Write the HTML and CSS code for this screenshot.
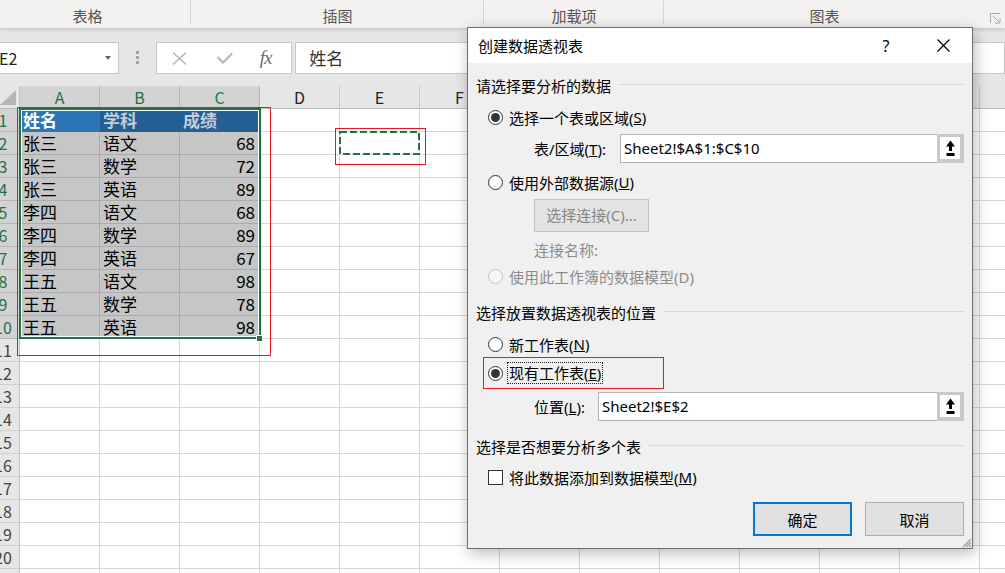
FILE: index.html
```html
<!DOCTYPE html>
<html>
<head>
    <meta charset="utf-8">
    <title>创建数据透视表</title>
    <link rel="stylesheet" href="styles.css">
</head>
<body>
    <div class="ribbon">
        <div class="group g-table">表格</div>
        <div class="group g-illus">插图</div>
        <div class="group g-addin">加载项</div>
        <div class="group g-chart">图表
            <svg class="launcher" width="11" height="11" viewBox="0 0 11 11">
                <path d="M0.5 10V0.5H10" fill="none" stroke="#a8a8a8"/>
                <path d="M3 3l6.5 6.5M5 10h5V5" fill="none" stroke="#a8a8a8"/>
            </svg>
        </div>
    </div>

    <div class="formula-bar">
        <div class="name-box"><span>E2</span><span class="caret"></span></div>
        <div class="grip"><i></i><i></i><i></i></div>
        <div class="fx-buttons">
            <svg class="fx-cancel" width="15" height="13" viewBox="0 0 15 13">
                <path d="M1 0.5L14 12.5M14 0.5L1 12.5" stroke="#b9b9b9" stroke-width="1.6"/>
            </svg>
            <svg class="fx-enter" width="17" height="12" viewBox="0 0 17 12">
                <path d="M1.5 5L7 10.5L16 1.5" fill="none" stroke="#b9b9b9" stroke-width="2.4"/>
            </svg>
            <span class="fx">fx</span>
        </div>
        <div class="formula-input">姓名</div>
    </div>

    <div class="sheet">
        <div class="col-heads">
            <div class="corner"></div>
            <div class="col sel">A</div>
            <div class="col sel">B</div>
            <div class="col sel">C</div>
            <div class="col">D</div>
            <div class="col">E</div>
            <div class="col">F</div>
            <!-- columns under the dialog -->
            <div class="col"></div>
            <div class="col"></div>
            <div class="col"></div>
            <div class="col"></div>
            <div class="col"></div>
            <div class="col"></div>
            <div class="col"></div>
        </div>
        <div class="sheet-body">
            <div class="row-heads">
                <div class="rh sel"><span>1</span></div>
                <div class="rh sel"><span>2</span></div>
                <div class="rh sel"><span>3</span></div>
                <div class="rh sel"><span>4</span></div>
                <div class="rh sel"><span>5</span></div>
                <div class="rh sel"><span>6</span></div>
                <div class="rh sel"><span>7</span></div>
                <div class="rh sel"><span>8</span></div>
                <div class="rh sel"><span>9</span></div>
                <div class="rh sel"><span>10</span></div>
                <div class="rh"><span>11</span></div>
                <div class="rh"><span>12</span></div>
                <div class="rh"><span>13</span></div>
                <div class="rh"><span>14</span></div>
                <div class="rh"><span>15</span></div>
                <div class="rh"><span>16</span></div>
                <div class="rh"><span>17</span></div>
                <div class="rh"><span>18</span></div>
                <div class="rh"><span>19</span></div>
                <div class="rh"><span>20</span></div>
                <div class="rh"></div>
            </div>
            <div class="cells">
                <div class="data">
                    <div class="th active">姓名</div><div class="th">学科</div><div class="th">成绩</div>
                    <div>张三</div><div>语文</div><div class="num">68</div>
                    <div>张三</div><div>数学</div><div class="num">72</div>
                    <div>张三</div><div>英语</div><div class="num">89</div>
                    <div>李四</div><div>语文</div><div class="num">68</div>
                    <div>李四</div><div>数学</div><div class="num">89</div>
                    <div>李四</div><div>英语</div><div class="num">67</div>
                    <div>王五</div><div>语文</div><div class="num">98</div>
                    <div>王五</div><div>数学</div><div class="num">78</div>
                    <div>王五</div><div>英语</div><div class="num">98</div>
                </div>
                <div class="selection"></div>
                <div class="fill-handle"></div>
                <svg class="copy-ants" width="81" height="24" viewBox="0 0 81 24">
                    <rect x="1" y="1" width="79" height="22" fill="none" stroke="#217346" stroke-width="2" stroke-dasharray="7 3"/>
                </svg>
                <div class="mark mark-table"></div>
                <div class="mark mark-target"></div>
            </div>
        </div>
    </div>

    <div class="dialog">
        <div class="dialog-title">
            <span class="title-text">创建数据透视表</span>
            <span class="title-help">?</span>
            <span class="title-close">
                <svg width="13" height="13" viewBox="0 0 13 13">
                    <path d="M0.5 0.5L12.5 12.5M12.5 0.5L0.5 12.5" stroke="#000" stroke-width="1.2"/>
                </svg>
            </span>
        </div>
        <div class="dialog-body">
            <div class="section sec-first">请选择要分析的数据</div>
            <div class="option"><span class="radio checked"></span>选择一个表或区域(<u>S</u>)</div>
            <div class="field field-range">
                <label>表/区域(<u>T</u>):</label>
                <div class="ref-input">Sheet2!$A$1:$C$10</div>
                <div class="ref-btn"><span>
                    <svg width="9" height="17" viewBox="0 0 9 17">
                        <path d="M4.5 0.5L9 6.5H6V11H3V6.5H0Z" fill="#000"/>
                        <rect x="0.5" y="13" width="8" height="3" fill="#000"/>
                    </svg>
                </span></div>
            </div>
            <div class="option option-ext"><span class="radio"></span>使用外部数据源(<u>U</u>)</div>
            <div class="conn-btn">选择连接(C)...</div>
            <div class="conn-name">连接名称:</div>
            <div class="option option-model disabled"><span class="radio"></span>使用此工作簿的数据模型(D)</div>

            <div class="section">选择放置数据透视表的位置</div>
            <div class="option"><span class="radio"></span>新工作表(<u>N</u>)</div>
            <div class="option option-exist">
                <span class="radio checked"></span><span class="focus-label">现有工作表(<u>E</u>)</span>
                <div class="mark mark-option"></div>
            </div>
            <div class="field field-loc">
                <label>位置(<u>L</u>):</label>
                <div class="ref-input">Sheet2!$E$2</div>
                <div class="ref-btn"><span>
                    <svg width="9" height="17" viewBox="0 0 9 17">
                        <path d="M4.5 0.5L9 6.5H6V11H3V6.5H0Z" fill="#000"/>
                        <rect x="0.5" y="13" width="8" height="3" fill="#000"/>
                    </svg>
                </span></div>
            </div>

            <div class="section">选择是否想要分析多个表</div>
            <div class="option option-multi"><span class="checkbox"></span>将此数据添加到数据模型(<u>M</u>)</div>

            <div class="actions">
                <button class="btn primary">确定</button>
                <button class="btn">取消</button>
            </div>
        </div>
        <svg class="resize-grip" width="11" height="11" viewBox="0 0 11 11">
            <path d="M10 2L2 10M10 5L5 10M10 8L8 10" stroke="#9a9a9a" stroke-width="1.2"/>
        </svg>
    </div>
</body>
</html>
```

FILE: styles.css
```css
* {
    box-sizing: border-box;
}

body {
    margin: 0;
    width: 1005px;
    height: 573px;
    overflow: hidden;
    position: relative;
    background: #fff;
    font-family: "Noto Sans CJK SC", "Noto Sans", sans-serif;
    color: #000;
}

/* Ribbon group labels */
.ribbon {
    display: flex;
    height: 28px;
    background: #f3f2f1;
    position: relative;
    z-index: 1;
    box-shadow: 0 1px 4px rgba(0, 0, 0, 0.2);
}

.ribbon .group {
    position: relative;
    height: 28px;
    padding-top: 6px;
    font-size: 15px;
    line-height: 20px;
    color: #555;
    text-align: center;
}

.ribbon .group::after {
    content: "";
    position: absolute;
    right: 0;
    top: 0;
    width: 1px;
    height: 24px;
    background: #d6d4d2;
}

.g-table { width: 191px; padding-right: 16px; }
.g-illus { width: 293px; }
.g-addin { width: 180px; }
.g-chart { flex: 1; padding-right: 20px; }
.ribbon .g-chart::after { display: none; }

.launcher {
    position: absolute;
    right: 4px;
    top: 13px;
}

/* Formula bar */
.formula-bar {
    display: flex;
    align-items: flex-start;
    height: 58px;
    padding-top: 14px;
    background: #e6e6e6;
}

.name-box {
    display: flex;
    align-items: center;
    justify-content: space-between;
    width: 125px;
    height: 32px;
    margin-left: -6px;
    padding: 0 7px 0 4px;
    border: 1px solid #c8c8c8;
    background: #fff;
    font-size: 16px;
    color: #222;
}

.caret {
    width: 0;
    height: 0;
    border-left: 3.5px solid transparent;
    border-right: 3.5px solid transparent;
    border-top: 4px solid #666;
}

.grip {
    display: flex;
    flex-direction: column;
    gap: 2px;
    margin: 9px 0 0 17px;
}

.grip i {
    width: 3px;
    height: 3px;
    background: #a3a3a3;
}

.fx-buttons {
    display: flex;
    align-items: center;
    width: 137px;
    height: 32px;
    margin-left: 17px;
    padding-left: 15px;
    border: 1px solid #c8c8c8;
    background: #fff;
}

.fx-enter { margin-left: 29px; }

.fx {
    margin-left: 27px;
    font-family: "Liberation Serif", serif;
    font-style: italic;
    font-size: 19px;
    color: #6e6e6e;
    letter-spacing: -1px;
}

.formula-input {
    width: 712px;
    height: 32px;
    margin-left: 3px;
    padding-left: 13px;
    border: 1px solid #c8c8c8;
    background: #fff;
    font-size: 17px;
    line-height: 29px;
    color: #333;
}

/* Worksheet */
.sheet {
    height: 487px;
    overflow: hidden;
}

.col-heads {
    display: flex;
    height: 23px;
}

.corner {
    position: relative;
    width: 20px;
    flex-shrink: 0;
    background: #e6e6e6;
    border-right: 1px solid #c3c3c3;
    border-bottom: 1px solid #bdbdbd;
}

.corner::after {
    content: "";
    position: absolute;
    right: 3px;
    bottom: 3px;
    width: 0;
    height: 0;
    border-left: 16px solid transparent;
    border-bottom: 15px solid #b5b5b5;
}

.col {
    width: 80px;
    flex-shrink: 0;
    background: #e6e6e6;
    border-right: 1px solid #c9c9c9;
    border-bottom: 1px solid #bdbdbd;
    text-align: center;
    font-size: 16px;
    line-height: 22px;
    color: #222;
}

.col.sel {
    background: #d3d3d3;
    border-right-color: #b5b5b5;
    color: #217346;
}

.sheet-body {
    display: flex;
}

.row-heads {
    width: 20px;
    flex-shrink: 0;
}

.rh {
    height: 23px;
    overflow: hidden;
    background: #e6e6e6;
    border-right: 1px solid #bdbdbd;
    border-bottom: 1px solid #cfcfcf;
    font-size: 16px;
    line-height: 22px;
    color: #444;
}

.rh span {
    display: block;
    width: 32px;
    margin-left: -13px;
    text-align: center;
}

.rh.sel {
    background: #d3d3d3;
    border-bottom-color: #b5b5b5;
    color: #217346;
}

.cells {
    position: relative;
    flex: 1;
    height: 464px;
    background-image:
        linear-gradient(to right, transparent 79px, #d6d6d6 79px),
        linear-gradient(to bottom, transparent 22px, #d6d6d6 22px);
    background-size: 80px 23px;
}

.data {
    display: grid;
    grid-template-columns: repeat(3, 80px);
    grid-auto-rows: 23px;
    width: 240px;
}

.data div {
    padding: 0 4px 0 3px;
    border-right: 1px solid #ababab;
    border-bottom: 1px solid #ababab;
    background: #c6c6c6;
    font-size: 17px;
    line-height: 22px;
    white-space: nowrap;
    overflow: hidden;
}

.data .num {
    text-align: right;
}

.data .th {
    background: #245e92;
    border-color: #245e92;
    color: #c4cdd9;
    font-weight: bold;
}

.data .th.active {
    background: #2e75b6;
    border-color: #2e75b6;
    color: #fff;
}

.selection {
    position: absolute;
    left: -1px;
    top: -1px;
    width: 242px;
    height: 231px;
    border: 2px solid #217346;
    box-shadow: inset 0 0 0 1px #fff;
}

.fill-handle {
    position: absolute;
    left: 236px;
    top: 226px;
    width: 7px;
    height: 7px;
    background: #217346;
    border: 1px solid #fff;
}

.copy-ants {
    position: absolute;
    left: 319px;
    top: 22px;
}

/* Red annotation boxes */
.mark {
    position: absolute;
    border: 1px solid #e5191f;
}

.mark-table { left: -3px; top: -2px; width: 254px; height: 249px; }
.mark-target { left: 315px; top: 19px; width: 91px; height: 37px; }

/* PivotTable dialog */
.dialog {
    position: absolute;
    left: 467px;
    top: 27px;
    z-index: 2;
    width: 506px;
    height: 522px;
    border: 1px solid #6e6e6e;
    background: #f0f0f0;
    box-shadow: 2px 4px 14px rgba(0, 0, 0, 0.28);
    font-family: "Noto Sans", "Noto Sans CJK SC", sans-serif;
    font-size: 15px;
}

.dialog-title {
    display: flex;
    align-items: center;
    height: 35px;
    padding-left: 10px;
    background: #fff;
}

.title-text {
    flex: 1;
}

.title-help {
    width: 30px;
    margin-right: 19px;
    text-align: center;
    font-size: 16px;
}

.title-close {
    display: flex;
    align-items: center;
    justify-content: center;
    width: 46px;
    margin-right: 6px;
}

.dialog-body {
    padding: 0 8px;
}

.section {
    display: flex;
    align-items: center;
    height: 22px;
    margin-top: 14px;
}

.section::after {
    content: "";
    flex: 1;
    height: 1px;
    margin: -2px 0 0 8px;
    background: #dadada;
}

.sec-first { margin-top: 11px; }

.option {
    display: flex;
    align-items: center;
    height: 22px;
    margin: 10px 0 0 12px;
}

.option-ext { margin-top: 8px; }
.option-model { margin-top: 4px; }
.option-exist { position: relative; margin-top: 7px; }
.option-multi { margin-top: 9px; }

.radio {
    position: relative;
    flex-shrink: 0;
    width: 15px;
    height: 15px;
    margin-right: 6px;
    border: 1px solid #333;
    border-radius: 50%;
    background: #fff;
}

.radio.checked::after {
    content: "";
    position: absolute;
    left: 2px;
    top: 2px;
    width: 9px;
    height: 9px;
    border-radius: 50%;
    background: #333;
}

.disabled {
    color: #8d8d8d;
}

.disabled .radio {
    border-color: #c4c4c4;
    background: #f7f7f7;
}

.checkbox {
    flex-shrink: 0;
    width: 15px;
    height: 15px;
    margin-right: 6px;
    border: 1px solid #333;
    background: #fff;
}

.focus-label {
    margin-left: -2px;
    padding: 0 1px;
    border: 1px dotted #222;
    line-height: 20px;
}

.mark-option { left: -5px; top: -5px; width: 181px; height: 32px; }

.field {
    display: flex;
    align-items: center;
    height: 29px;
    margin: 6px 0 0 58px;
}

.field-loc { margin-top: 8px; }

.field label { flex-shrink: 0; }
.field-range label { width: 86px; }
.field-loc label { width: 64px; }

.ref-input {
    flex: 1;
    height: 29px;
    padding-left: 3px;
    border: 1px solid #b4b4b4;
    border-right: none;
    background: #fff;
    line-height: 27px;
}

.ref-btn {
    width: 27px;
    height: 29px;
    padding: 3px 4px 4px 3px;
    background: #c9c9c9;
}

.ref-btn span {
    display: flex;
    align-items: center;
    justify-content: center;
    width: 20px;
    height: 22px;
    background: #fff;
}

.conn-btn {
    width: 115px;
    height: 33px;
    margin: 6px 0 0 58px;
    border: 1px solid #c0c0c0;
    background: #e3e3e3;
    color: #868686;
    text-align: center;
    line-height: 31px;
}

.conn-name {
    height: 22px;
    margin: 7px 0 0 58px;
    color: #8d8d8d;
    line-height: 22px;
}

.actions {
    display: flex;
    justify-content: flex-end;
    gap: 13px;
    margin-top: 14px;
}

.btn {
    width: 99px;
    height: 34px;
    border: 1px solid #adadad;
    background: #e1e1e1;
    font-family: inherit;
    font-size: 15px;
    color: #000;
}

.btn.primary {
    border: 2px solid #0078d7;
}

.resize-grip {
    position: absolute;
    right: 0;
    bottom: 0;
}
```
